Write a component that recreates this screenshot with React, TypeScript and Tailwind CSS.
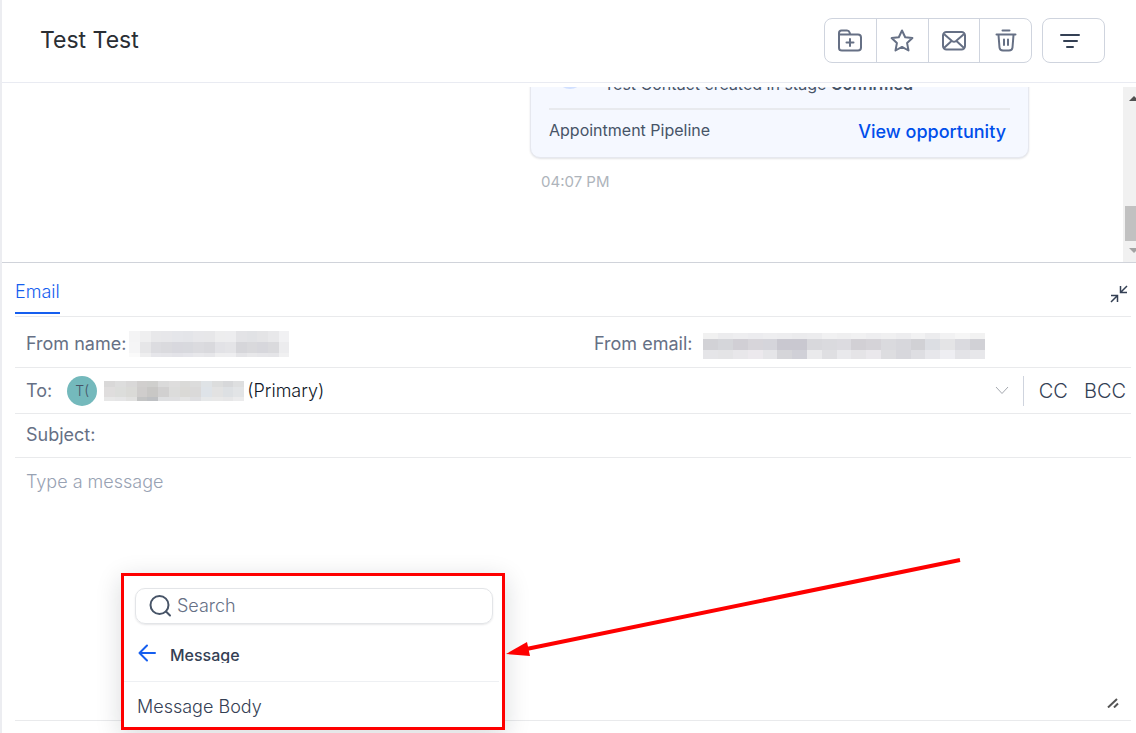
import React, { useState } from 'react';

interface MosaicProps {
  rows: string[][];
  heights: number[];
  className: string;
}

const nameMosaic = [
  ['#f4f4f5', '#efeff0', '#e8e8ea', '#e7e7ea', '#e5e6ea', '#e4e5e9', '#e7e7ea', '#e7e7e9', '#ededee', '#ededef', '#e3e3e6', '#e1e2e5', '#e4e4e6', '#e8e8ea', '#f1f1f3'],
  ['#f5f5f6', '#e6e6e8', '#dcdce0', '#dadade', '#d8d8de', '#d8d9de', '#dbdbdf', '#d9d9dd', '#e2e2e6', '#e4e4e7', '#d6d6da', '#d9d9dc', '#d7d7dc', '#dadadd', '#ececee'],
  ['#fafafa', '#eeeeef', '#e6e6ea', '#e5e5e9', '#e3e3e8', '#e5e5ea', '#e8e8eb', '#e6e6e9', '#eeeeef', '#eeeef0', '#e4e4e7', '#e8e8ea', '#e6e6e9', '#e5e5e8', '#f0f0f1'],
];

const emailMosaic = [
  ['#f1f1f1', '#ececee', '#eeeef0', '#ececef', '#eeeef0', '#ededef', '#ebebed', '#ececee', '#f1f1f2', '#efeff0', '#f1f1f2', '#eeeef0', '#f0f0f1', '#ededef', '#f2f2f3', '#ececee', '#f2f2f3', '#f6f6f6', '#f2f2f2'],
  ['#d2d2d6', '#d5d6da', '#d1cfd5', '#d7d5da', '#d5d5db', '#c9c8d0', '#c9c8d0', '#d8d8dc', '#dadade', '#dcdbe0', '#d2d0d5', '#d5d3d8', '#dadade', '#d7d7dc', '#d1d1d5', '#dcdee3', '#e4e4e6', '#dadadf', '#d1d1d6'],
  ['#e5e5e8', '#e4e4e6', '#e8e7ea', '#ece9ed', '#e5e5e8', '#d5d5d9', '#d0d0d7', '#eaeaec', '#dfdfe2', '#e9e9ec', '#e5e4e7', '#eae8ec', '#dddde0', '#d7d7dc', '#dedee2', '#e7e7eb', '#eeeef2', '#e3e3e7', '#e7e7ea'],
];

const recipientMosaic = [
  ['#d9d8d8', '#dddddd', '#d9d8d8', '#d1cfce', '#cfcfcd', '#dadada', '#dedddd', '#dadad8', '#dcdcdc', '#dfe3e6', '#dcdddd', '#d7d8da', '#dedfe0'],
  ['#dfdddd', '#dcdddb', '#dadad7', '#cfcdcc', '#c8c7c5', '#d1d0d0', '#dcdcdb', '#dad9d6', '#dad9d9', '#dee3e8', '#e2e2e2', '#dde0e3', '#e2e4e6'],
  ['#e7e7e7', '#e5e5e6', '#e1e1e0', '#c3c4c4', '#bec0c3', '#dedfe1', '#dfdfe1', '#e3e3e3', '#dedee1', '#e6e8e9', '#e8e8e8', '#e6e6e7', '#ebebec'],
];

const Mosaic: React.FC<MosaicProps> = ({ rows, heights, className }) => (
  <span className={`block shrink-0 ${className}`} aria-hidden="true">
    {rows.map((row, i) => (
      <span key={i} className="flex" style={{ height: heights[i] }}>
        {row.map((color, j) => (
          <span key={j} className="flex-1" style={{ backgroundColor: color }} />
        ))}
      </span>
    ))}
  </span>
);

const ToolButton = ({ label, children }: { label: string, children: React.ReactNode }) => (
  <button aria-label={label} className="flex h-full flex-1 items-center justify-center border-l border-[#cfd4de] text-[#667085] first:border-l-0">
    <svg width="26" height="26" viewBox="0 0 26 26" fill="none" stroke="currentColor" strokeWidth="2" strokeLinecap="round" strokeLinejoin="round">
      {children}
    </svg>
  </button>
);

const Header = () => (
  <header className="flex h-[83px] shrink-0 items-start justify-between border-b border-[#e9ebf2] pt-[18px] pr-[31px] pl-[38px]">
    <h1 className="mt-1 text-[23px] leading-9 text-[#2a2e34]">Test Test</h1>
    <div className="flex gap-[10px]">
      <div className="flex h-[45px] w-[208px] overflow-hidden rounded-lg border border-[#cfd4de]">
        <ToolButton label="Add to folder">
          <path d="M2 20V5q0-2.500 2.500-2.500h5.500q2 0 2.600 2l.6 2H21q3 0 3 3v10q0 3-3 3H5q-3 0-3-2.500zM2 6.500h10.500M13 11v7M9.500 14.500h7" />
        </ToolButton>
        <ToolButton label="Star">
          <path d="M13 2.500l3.200 6.700 7.200.9-5.300 5 1.400 7.400-6.500-3.600-6.500 3.600 1.400-7.400-5.300-5 7.200-.9z" />
        </ToolButton>
        <ToolButton label="Mark as unread">
          <rect x="2" y="4" width="22" height="17.500" rx="3.500" />
          <path d="M3.500 6.500l7.500 6.500q2 1.600 4 0l7.500-6.500M3.500 19.500l6.500-6M22.500 19.500L16 13.500" />
        </ToolButton>
        <ToolButton label="Delete">
          <path d="M9.500 2.500h7M3.500 6.500h19M5.500 7l1 12.500Q6.800 22.500 10 22.500h6q3.200 0 3.500-3l1-12.500M11 11.500v5.500M15 11.500v5.500" />
        </ToolButton>
      </div>
      <button aria-label="Filter" className="flex h-[45px] w-[63px] items-center justify-center rounded-lg border border-[#cfd4de] pr-[7px] text-[#344054]">
        <svg width="22" height="16" viewBox="0 0 22 16" fill="none" stroke="currentColor" strokeWidth="2" strokeLinecap="round">
          <path d="M2 2h18M5 8h13M8 14h6" />
        </svg>
      </button>
    </div>
  </header>
);

const Thread = () => (
  <section className="mt-1 flex h-[176px] shrink-0 border-b border-[#d0d3da]">
    <div className="flex flex-1 flex-col items-end justify-end overflow-hidden pr-[94px] pb-[68px]">
      <div className="w-[499px]">
        <div className="rounded-[10px] border border-[#e6e8ef] bg-[#f5f8ff] px-[18px] pb-2 shadow-[0_1px_2px_rgba(16,24,40,0.12)]">
          <div className="flex items-end border-b-2 border-[#e8eaee] pb-[14px]">
            <span className="mr-5 mb-[5px] ml-[7px] size-7 rounded-full bg-[#d1e0ff]" />
            <p className="text-base leading-5 text-[#475467]">
              Test Contact created in stage <b className="font-semibold">Confirmed</b>
            </p>
          </div>
          <div className="flex h-[39px] items-start justify-between pt-2 pr-1">
            <span className="text-base leading-6 text-[#475467]">Appointment Pipeline</span>
            <a href="#opportunity" className="text-lg leading-7 font-medium text-[#004eeb]">View opportunity</a>
          </div>
        </div>
        <time className="mt-3 ml-[11px] block text-[15px] leading-6 text-[#aeb4bb]">04:07 PM</time>
      </div>
    </div>
    <div className="flex w-[13px] flex-col justify-end overflow-hidden bg-[#f1f1f1]" aria-hidden="true">
      <svg className="mt-2 mb-auto ml-[6px] shrink-0" width="10" height="6" viewBox="0 0 10 6"><path d="M0 6l5-5 5 5z" fill="#505050" /></svg>
      <span className="ml-[2px] h-[35px] bg-[#c1c1c1]" />
      <svg className="mt-[6px] mb-[9px] ml-[6px] shrink-0" width="10" height="6" viewBox="0 0 10 6"><path d="M0 1h10L5 6z" fill="#a3a3a3" /></svg>
    </div>
  </section>
);

const VariableMenu = () => {
  const [search, setSearch] = useState('');

  return (
    <div className="absolute top-[573px] left-[121px] h-[157px] w-[384px] border-[3px] border-[#fe0000] bg-white shadow-[0_6px_24px_rgba(16,24,40,0.16)]">
      <div className="pt-3 pr-[9px] pl-[11px]">
        <label className="flex h-9 items-center gap-1 rounded-[10px] border border-[#e3e5e8] px-3 shadow-[0_1px_2px_rgba(16,24,40,0.1)]">
          <svg className="shrink-0 text-[#475467]" width="25" height="26" viewBox="0 0 25 26" fill="none" stroke="currentColor" strokeWidth="2" strokeLinecap="round">
            <circle cx="11.500" cy="12" r="9" />
            <path d="M18 18.500l4 4" />
          </svg>
          <input
            type="text"
            aria-label="Search"
            placeholder="Search"
            value={search}
            onChange={(e) => setSearch(e.target.value)}
            className="min-w-0 flex-1 text-lg font-light outline-none placeholder:text-[#667085]"
          />
        </label>
      </div>
      <div className="mr-[3px] flex h-[58px] items-center border-b border-[#eef0f3] pl-[13px]">
        <button aria-label="Back" className="mr-[13px] text-[#155eef]">
          <svg width="20" height="20" viewBox="0 0 20 20" fill="none" stroke="currentColor" strokeWidth="2" strokeLinecap="round" strokeLinejoin="round">
            <path d="M18 10H2.500M10 2.500L2.500 10l7.500 7.500" />
          </svg>
        </button>
        <span className="h-5 overflow-hidden text-base leading-6 font-medium text-[#344054]">Message</span>
      </div>
      <button className="block h-[50px] w-full pl-[13px] text-left text-lg font-light text-[#344054]">Message Body</button>
    </div>
  );
};

const Composer = () => {
  const [subject, setSubject] = useState('');
  const [message, setMessage] = useState('');

  return (
    <section className="flex min-h-0 flex-1 flex-col pr-[5px] pl-[13px] text-lg text-[#667085]">
      <div className="flex h-[54px] shrink-0 items-start justify-between border-b border-[#e9eaec]">
        <button className="h-[51px] border-b-2 border-[#155eef] pt-2 font-light text-[#155eef]">Email</button>
        <button aria-label="Collapse" className="mt-[22px] mr-[3px] text-[#344054]">
          <svg width="18" height="18" viewBox="0 0 18 18" fill="none" stroke="currentColor" strokeWidth="1.500">
            <path d="M17 1l-6 6M10.500 1v6.500H17M1 17l6-6M1 10.500h6.500V17" />
          </svg>
        </button>
      </div>

      <div className="flex h-[51px] shrink-0 items-center border-b border-[#e9eaec] pt-1 pl-[11px]">
        <div className="flex w-[568px] shrink-0 items-center">
          <span>From name:</span>
          <Mosaic rows={nameMosaic} heights={[11, 11, 4]} className="ml-[3px] w-[160px]" />
        </div>
        <span>From email:</span>
        <Mosaic rows={emailMosaic} heights={[6, 11, 9]} className="mt-1 ml-[11px] w-[281px]" />
      </div>

      <div className="flex h-[46px] shrink-0 items-center border-b border-[#e9eaec] pl-[11px]">
        <span>To:</span>
        <button aria-haspopup="listbox" aria-label="Recipient" className="ml-[15px] flex flex-1 items-center text-left">
          <span className="flex size-[30px] items-center justify-center rounded-full bg-[#74b9bc] text-sm font-light text-[#475467]">T(</span>
          <Mosaic rows={recipientMosaic} heights={[6, 10, 4]} className="ml-[7px] w-[140px]" />
          <span className="ml-[3px] font-light text-[#101828]">(Primary)</span>
          <svg className="mr-[14px] ml-auto text-[#a4a8af]" width="14" height="9" viewBox="0 0 14 9" fill="none" stroke="currentColor">
            <path d="M1 1l6 6.500L13 1" />
          </svg>
        </button>
        <div className="flex h-[30px] items-center gap-4 border-l border-[#cfd4de] pr-[5px] pl-[15px] text-xl font-light text-[#344054]">
          <button>CC</button>
          <button>BCC</button>
        </div>
      </div>

      <div className="flex h-11 shrink-0 items-center border-b border-[#e9eaec] pb-[2px] pl-[11px]">
        <label htmlFor="subject">Subject:</label>
        <input
          id="subject"
          type="text"
          value={subject}
          onChange={(e) => setSubject(e.target.value)}
          className="ml-2 min-w-0 flex-1 outline-none"
        />
      </div>

      <div className="relative mb-3 flex flex-1 border-b border-[#e9eaec]">
        <textarea
          aria-label="Message"
          placeholder="Type a message"
          value={message}
          onChange={(e) => setMessage(e.target.value)}
          className="flex-1 resize-none px-[11px] pt-[10px] font-light outline-none placeholder:text-[#98a2b3]"
        />
        <svg className="absolute right-3 bottom-3" width="12" height="10" viewBox="0 0 12 10" fill="none" stroke="#555" strokeWidth="2">
          <path d="M1 9.500L10 1M7 9.500l4-4" />
        </svg>
      </div>
    </section>
  );
};

const App: React.FC = () => {
  return (
    <main className="relative flex h-screen min-h-[600px] flex-col overflow-hidden border-l-2 border-[#ecedf1] bg-white font-['Inter',sans-serif]">
      <Header />
      <Thread />
      <Composer />
      <div className="absolute top-0 -left-[2px]">
        <VariableMenu />
        <svg className="pointer-events-none absolute top-[550px] left-[500px]" width="470" height="120" viewBox="0 0 470 120" aria-hidden="true">
          <path d="M24 99.500L460 10" stroke="#fe0000" strokeWidth="4" />
          <path d="M6 104L27 92l3 14z" fill="#fe0000" />
        </svg>
      </div>
    </main>
  );
};

export default App;
